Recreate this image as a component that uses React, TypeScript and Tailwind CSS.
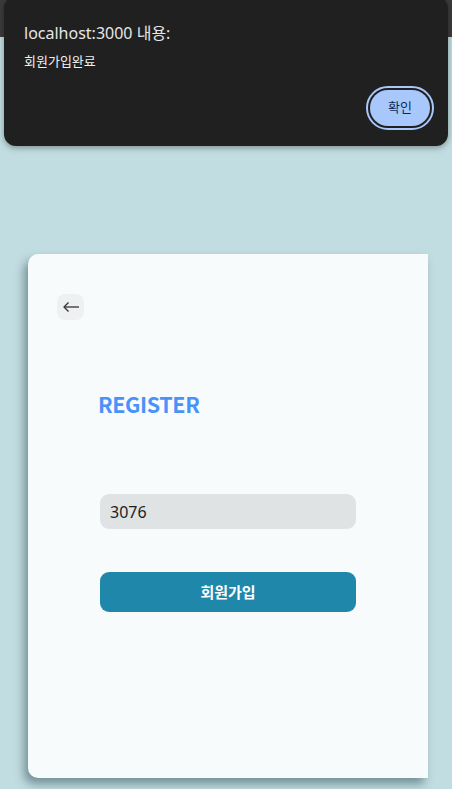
import React from "react";

export default function App() {
  return (
    <div className="relative w-[452px] h-[789px] overflow-hidden bg-[#c2dde1]" style={{ fontFamily: '"Noto Sans", "Noto Sans CJK KR", sans-serif' }}>
      <div className="h-[37px] bg-[#3b3b3b]" />
      <div className="pt-[217px] pl-[28px]">
        <div className="w-[400px] h-[524px] bg-[#f8fbfc] rounded-l-[10px] shadow-[-4px_6px_10px_rgba(40,70,80,0.5)] flex flex-col">
          <div className="pt-[40px] pl-[29px]">
            <button className="w-[27px] h-[26px] rounded-[8px] bg-[#eef0f1] flex items-center justify-center">
              <svg width="18" height="12" viewBox="0 0 18 12" fill="none" stroke="#333" strokeWidth="1.3">
                <path d="M17 6H2" />
                <path d="M6.5 1.5L2 6l4.5 4.5" />
              </svg>
            </button>
          </div>
          <div className="pl-[70px] pt-[69px]">
            <h1 className="text-[21.5px] leading-[30px] font-bold text-[#4a92f8] tracking-[-0.4px]" style={{ fontFamily: '"Noto Sans CJK KR", sans-serif' }}>REGISTER</h1>
          </div>
          <div className="pl-[72px] pt-[75px]">
            <div className="w-[256px] h-[35px] rounded-[9px] bg-[#e0e3e4] flex items-center pl-[10px] text-[16px] text-[#1e1e1e]">3076</div>
          </div>
          <div className="pl-[72px] pt-[43px]">
            <button className="w-[256px] h-[40px] rounded-[9px] bg-[#1f87aa] flex items-center justify-center text-white text-[15px] font-bold" style={{ fontFamily: '"Noto Sans CJK KR", sans-serif' }}>회원가입</button>
          </div>
        </div>
      </div>

      <div className="absolute left-[4px] top-[-4px] w-[444px] h-[150px] rounded-[12px] bg-[#202020] shadow-[0_2px_6px_rgba(0,0,0,0.35)] flex flex-col pl-[20px] pr-[14px]">
        <div className="pt-[26px] text-[16px] leading-[22px] text-[#e6e6e6]">localhost:3000 내용:</div>
        <div className="pt-[8px] text-[13px] leading-[18px] text-[#f0f0f0]">회원가입완료</div>
        <div className="flex justify-end pt-[16px]">
          <div className="rounded-full border-[2px] border-[#a8c7fa] p-[2px] bg-[#202020]">
            <button className="w-[60px] h-[36px] rounded-full bg-[#a8c7fa] text-[#0a2a5a] text-[13px] flex items-center justify-center">확인</button>
          </div>
        </div>
      </div>
    </div>
  );
}
